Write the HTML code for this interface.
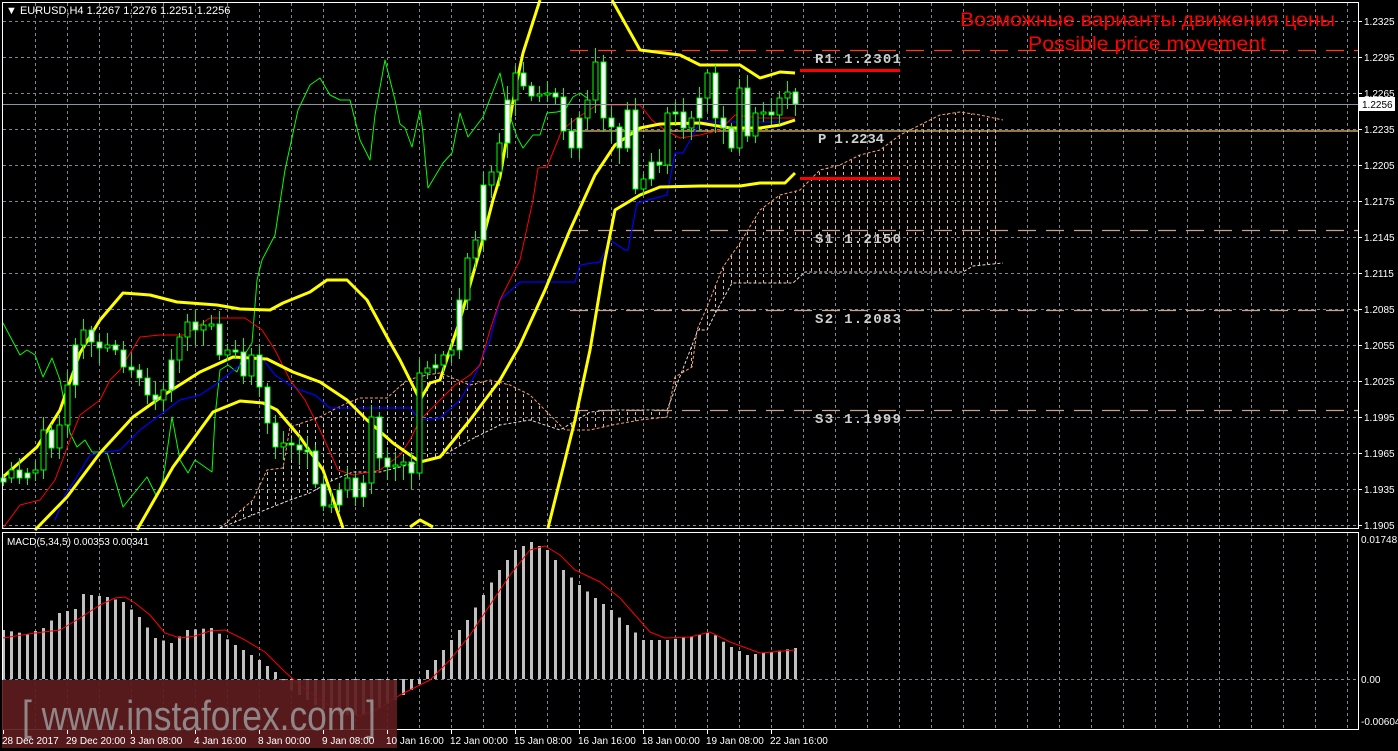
<!DOCTYPE html>
<html><head><meta charset="utf-8"><style>
html,body{margin:0;padding:0;background:#000;overflow:hidden}
svg{display:block}
text{font-family:"Liberation Sans","DejaVu Sans",sans-serif}
text.mono{font-family:"Liberation Mono","DejaVu Sans Mono",monospace;font-weight:bold}
</style></head><body>
<svg id="s" width="1398" height="751" xmlns="http://www.w3.org/2000/svg">
<rect width="1398" height="751" fill="#000"/>
<g id="grid" stroke="#7c8790" stroke-width="1" stroke-dasharray="3,3" fill="none"></g>
<g id="cloud"></g>
<g id="lines" fill="none"></g>
<g id="candles"></g>
<g id="macd"></g>
<rect x="2.5" y="2.5" width="1356" height="526" fill="none" stroke="#fff"/>
<rect x="2.5" y="532.5" width="1356" height="197" fill="none" stroke="#fff"/>
<g id="axis" fill="#fff" font-size="10"></g>
<text x="6" y="14" fill="#fff" font-size="11">▼ EURUSD,H4  1.2267 1.2276 1.2251 1.2256</text>
<text x="7" y="545" fill="#fff" font-size="10">MACD(5,34,5) 0.00353 0.00341</text>
<text x="960" y="26" fill="#f00" font-size="19" textLength="375" lengthAdjust="spacingAndGlyphs">Возможные варианты движения цены</text>
<text x="1028" y="50" fill="#f00" font-size="19" textLength="238" lengthAdjust="spacingAndGlyphs">Possible price movement</text>
<g font-size="14" fill="#d0d0d0">
<text class="mono" x="815" y="63" textLength="86">R1 1.2301</text>
<text class="mono" x="818" y="143" textLength="66">P 1.2234</text>
<text class="mono" x="815" y="243" textLength="86">S1 1.2150</text>
<text class="mono" x="815" y="323" textLength="86">S2 1.2083</text>
<text class="mono" x="815" y="423" textLength="86">S3 1.1999</text>
</g>
<rect x="2" y="680" width="395" height="68" fill="#5e1c1e" fill-opacity="0.92"/>
<text x="22" y="730" fill="#9a9a9a" fill-opacity="0.85" font-size="42" textLength="354" lengthAdjust="spacingAndGlyphs">[ www.instaforex.com ]</text>
<g id="tax" fill="#fff" font-size="10"></g>
</svg>
<script>
var NS="http://www.w3.org/2000/svg";
function el(p,t,a){var e=document.createElementNS(NS,t);for(var k in a)e.setAttribute(k,a[k]);document.getElementById(p).appendChild(e);return e;}
function pl(p,pts,st,w,extra){var a={points:pts,stroke:st,"stroke-width":w,fill:"none","stroke-linejoin":"round"};for(var k in extra)a[k]=extra[k];return el(p,"polyline",a);}
for(var x=35;x<1358;x+=32){el("grid","line",{x1:x+.5,y1:3,x2:x+.5,y2:528});el("grid","line",{x1:x+.5,y1:533,x2:x+.5,y2:729});}
for(var y=21;y<528;y+=36){el("grid","line",{x1:3,y1:y+.5,x2:1358,y2:y+.5});}
el("grid","line",{x1:3,y1:679.5,x2:1358,y2:679.5});
var pr=["1.2325","1.2295","1.2265","1.2235","1.2205","1.2175","1.2145","1.2115","1.2085","1.2055","1.2025","1.1995","1.1965","1.1935","1.1905"];
pr.forEach(function(p,i){var y=21+36*i;el("axis","text",{x:1364,y:y+4}).textContent=p;el("axis","line",{x1:1359,y1:y+.5,x2:1362,y2:y+.5,stroke:"#fff"});});
el("axis","text",{x:1361,y:543}).textContent="0.01748";
el("axis","text",{x:1361,y:683}).textContent="0.00";
el("axis","text",{x:1361,y:725}).textContent="-0.00604";
var tl=["28 Dec 2017","29 Dec 20:00","3 Jan 08:00","4 Jan 16:00","8 Jan 00:00","9 Jan 08:00","10 Jan 16:00","12 Jan 00:00","15 Jan 08:00","16 Jan 16:00","18 Jan 00:00","19 Jan 08:00","22 Jan 16:00"];
tl.forEach(function(t,i){el("tax","text",{x:2+64*i,y:744}).textContent=t;el("tax","line",{x1:3+64*i+.5,y1:730,x2:3+64*i+.5,y2:734,stroke:"#fff"});});
el("axis","line",{x1:3,y1:104.5,x2:1358,y2:104.5,stroke:"#8894a0"});
el("axis","rect",{x:1359,y:97,width:36,height:14,fill:"#fff"});
var pt=el("axis","text",{x:1362,y:108,fill:"#000"});pt.textContent="1.2256";
pl("lines","570,50.5 1358,50.5","#ff3a1a",1.3,{"stroke-dasharray":"18,10"});
pl("lines","800,70.5 900,70.5","#f00",3);
pl("lines","800,178.5 900,178.5","#f00",3);
pl("lines","570,131 1358,131","#e8c070",1.2);
pl("lines","570,230.5 1358,230.5","#c8a090",1.3,{"stroke-dasharray":"18,10"});
pl("lines","570,310.5 1358,310.5","#c8a090",1.3,{"stroke-dasharray":"18,10"});
pl("lines","570,410.5 1358,410.5","#c8a090",1.3,{"stroke-dasharray":"18,10"});
var up1=[[220,528],[253,500],[267,470],[283,468],[290,427],[320,417],[333,410],[347,403],[360,398],[387,398],[407,380],[427,375],[440,373],[470,385],[490,380],[510,385],[530,395],[550,415],[565,430],[590,430],[612,425],[640,420],[667,417],[675,377],[692,367],[697,330],[707,307],[723,267],[740,243],[760,210],[780,195],[800,190],[820,170],[840,165],[860,155],[880,150],[900,135],[920,125],[940,115],[960,112],[980,115],[1003,120]];
var lo1=[[220,528],[290,500],[310,493],[333,480],[353,472],[380,472],[440,457],[470,440],[500,425],[530,420],[560,430],[590,412],[612,410],[667,410],[698,330],[707,330],[717,310],[732,283],[793,283],[805,272],[963,272],[973,266],[1003,263]];
function s(a){return a.map(function(p){return p.join(",")}).join(" ");}
el("cloud","clipPath",{id:"cc"});
el("cc","polygon",{points:s(up1)+" "+s(lo1.slice().reverse())});
var cg=el("cloud","g",{"clip-path":"url(#cc)"});
for(var x=227;x<1004;x+=8){var l=document.createElementNS(NS,"line");l.setAttribute("x1",x+.5);l.setAttribute("x2",x+.5);l.setAttribute("y1",100);l.setAttribute("y2",528);l.setAttribute("stroke",x<450?"#d8c8c0":"#f4b080");l.setAttribute("stroke-dasharray","3,3");cg.appendChild(l);}
pl("cloud",s(up1),"#f4a070",1,{"stroke-dasharray":"3,2"});
pl("cloud",s(lo1),"#e0dcd8",1,{"stroke-dasharray":"3,2"});
pl("lines","3,323 20,355 27,350 35,355 43,377 52,358 60,380 70,433 77,447 85,440 92,452 107,452 123,507 147,477 157,497 163,480 172,417 180,460 188,473 195,460 212,472 215,417 220,370 228,365 237,372 243,357 252,343 257,280 262,260 275,235 285,170 298,110 310,85 320,78 330,95 340,100 350,100 360,140 370,160 375,115 385,60 395,100 400,124 405,128 412,147 420,110 423,133 425,157 428,188 443,163 452,153 460,113 468,137 483,117 500,73 507,107 517,137 523,148 533,135 540,135 547,113 557,112 565,110 573,97 580,93 587,98","#00ff00",1);
pl("lines","55,520 65,495 75,480 90,455 120,450 140,430 160,415 180,400 200,395 215,385 240,365 260,355 275,375 290,385 300,390 315,395 330,408 410,408 420,420 440,418 460,400 475,375 490,340 500,300 520,282 575,282 580,265 600,262 610,240 625,250 628,250 637,203 667,195 675,153 683,153 700,122 795,122","#0000ff",1.2);
pl("lines","3,528 20,505 40,500 55,480 70,440 80,415 100,400 110,380 120,370 140,337 160,335 185,335 210,318 245,318 262,330 275,350 290,380 305,400 320,430 338,470 353,475 380,470 400,455 410,440 420,420 440,400 455,385 470,375 480,365 490,330 500,300 520,260 533,200 538,168 547,167 562,130 577,118 597,105 640,105 652,120 665,130 680,138 700,135 720,130 735,115 760,118 780,118 795,118","#ff0000",1);
var Y="#ffff00";
pl("lines","3,477 37,447 60,410 80,353 100,320 123,293 150,295 177,302 217,305 240,309 270,310 283,303 310,292 327,280 347,280 367,300 387,337 400,360 420,400 430,383 440,380 460,320 480,250 493,200 500,177 515,90 523,53 540,0",Y,3);
pl("lines","35,530 67,497 100,453 133,417 167,393 200,372 233,357 267,359 293,372 320,382 347,400 367,420 393,443 420,462 440,457 470,420 500,380 520,345 545,290 570,230 595,175 615,145 640,128 660,124 700,123 730,128 760,128 780,125 795,120",Y,3);
pl("lines","137,530 173,467 213,412 240,401 263,403 277,410 300,437 323,470 343,528",Y,3);
pl("lines","410,527 420,520 433,527",Y,3);
pl("lines","548,528 560,480 575,420 590,350 605,260 615,210 640,195 660,187 700,186 740,186 760,183 785,183 795,173",Y,3);
pl("lines","612,0 640,50 680,55 700,65 740,65 760,78 780,72 795,73",Y,3);
var c=[478,470,478,473,470,430,448,425,385,345,330,342,348,345,350,367,370,378,395,400,390,360,337,322,330,325,324,355,350,352,376,355,387,423,447,443,445,450,451,484,506,505,490,478,497,483,417,458,467,465,462,473,373,368,365,355,350,300,258,240,185,172,143,100,73,86,96,94,93,97,131,148,118,100,62,118,127,148,110,189,179,162,165,113,112,128,118,98,73,118,128,148,88,136,113,112,115,98,92,104];
for(var i=0;i<c.length;i++){var x=3+8*i;var o=i?c[i-1]:482;var cl=c[i];var t=Math.min(o,cl),b=Math.max(o,cl);if(b-t<2)b=t+2;
 var r1=((i*37)%11)+4,r2=((i*53)%13)+4;
 el("candles","line",{x1:x+.5,x2:x+.5,y1:t-r1,y2:b+r2,stroke:"#00ff00"});
 el("candles","rect",{x:x-2,y:t,width:5,height:b-t,fill:(cl>o||i%3==0)?"#fff":"#000",stroke:"#00ff00","stroke-width":1});}
var mk=[[3,630],[27,634],[43,628],[59,613],[75,609],[83,594],[107,597],[123,602],[139,617],[155,638],[171,643],[187,630],[211,628],[235,645],[259,660],[275,672],[291,690],[315,705],[335,715],[365,715],[395,700],[411,690],[419,684],[427,670],[435,660],[451,640],[467,620],[483,595],[499,570],[515,550],[531,542],[547,550],[563,570],[579,585],[595,598],[611,610],[627,625],[643,640],[667,640],[699,635],[711,632],[727,645],[747,655],[771,652],[795,648]];
function interp(x){for(var j=0;j<mk.length-1;j++){if(x>=mk[j][0]&&x<=mk[j+1][0]){var f=(x-mk[j][0])/(mk[j+1][0]-mk[j][0]);return mk[j][1]+f*(mk[j+1][1]-mk[j][1]);}}return mk[mk.length-1][1];}
for(var i=0;i<100;i++){var x=3+8*i;var y=interp(x);var t=Math.min(y,679),b=Math.max(y,679);el("macd","rect",{x:x-1,y:t,width:3,height:Math.max(1,b-t),fill:"#c0c0c0"});}
pl("macd","3,638 35,633 60,630 80,618 100,605 115,598 125,597 135,603 150,615 165,633 180,638 195,636 210,631 225,630 245,640 265,652 285,672 300,685 320,700 340,712 360,716 380,708 400,695 420,685 430,680 450,660 470,635 490,605 510,575 530,550 545,546 560,555 575,570 600,582 620,598 635,615 650,632 665,638 690,637 710,632 730,642 760,653 795,650","#ff0000",1);
</script>
</body></html>
